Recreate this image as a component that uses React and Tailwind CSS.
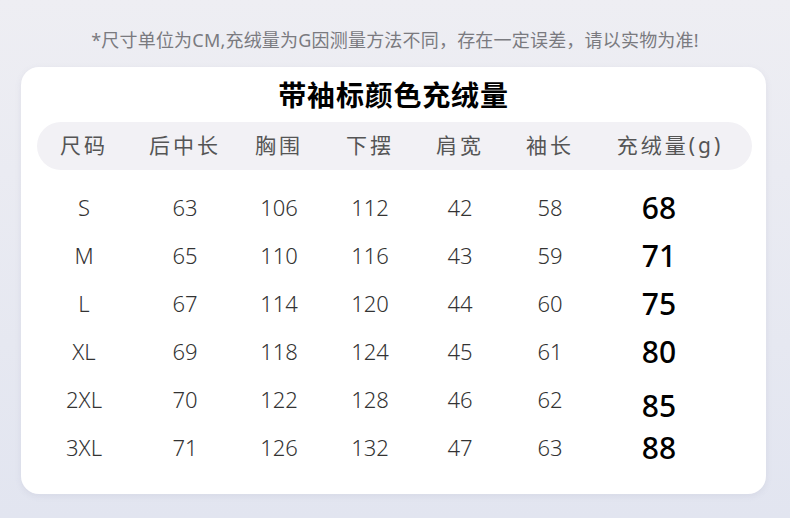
const rows = [
  ['S', '63', '106', '112', '42', '58', '68', ''],
  ['M', '65', '110', '116', '43', '59', '71', ''],
  ['L', '67', '114', '120', '44', '60', '75', ''],
  ['XL', '69', '118', '124', '45', '61', '80', ''],
  ['2XL', '70', '122', '128', '46', '62', '85', 'translate-y-[6px]'],
  ['3XL', '71', '126', '132', '47', '63', '88', ''],
];

const heads = ['尺码', '后中长', '胸围', '下摆', '肩宽', '袖长', '充绒量(g)'];

const cols = 'grid grid-cols-[94px_108px_80px_102px_78px_102px_138px]';

export default function App() {
  return (
    <div
      className="w-[790px] h-[518px] overflow-hidden bg-gradient-to-b from-[#eeeef3] to-[#e2e5f0] flex flex-col items-center"
      style={{ fontFamily: '"Noto Sans", "Noto Sans CJK SC", sans-serif' }}
    >
      <p className="mt-[29px] h-[22px] leading-[22px] text-[18px] text-[#7a7a7f] tracking-[0.2px]">
        *尺寸单位为CM,充绒量为G因测量方法不同，存在一定误差，请以实物为准!
      </p>

      <div className="mt-[16px] w-[745px] h-[427px] self-start ml-[21px] bg-white rounded-[18px] shadow-[0_2px_6px_rgba(120,120,160,0.12)] flex flex-col">
        <h1 className="mt-[11px] h-[34px] leading-[34px] text-center text-[28px] font-bold text-black tracking-[0.8px]">
          带袖标颜色充绒量
        </h1>

        <div className={`${cols} mt-[10px] ml-[16px] w-[715px] h-[48px] items-center rounded-full bg-[#f2f1f5] text-[21px] text-[#555] tracking-[3px]`}>
          {heads.map((h) => (
            <div key={h} className="text-center">{h}</div>
          ))}
        </div>

        <div className="mt-[13px] ml-[16px] flex flex-col">
          {rows.map((r) => (
            <div key={r[0]} className={`${cols} h-[48px] items-center text-[22px] font-light text-[#333]`}>
              {r.slice(0, 6).map((v, i) => (
                <div key={i} className="text-center">{v}</div>
              ))}
              <div className={`text-center pr-[22px] text-[30px] font-medium text-black ${r[7]}`}>{r[6]}</div>
            </div>
          ))}
        </div>
      </div>
    </div>
  );
}
